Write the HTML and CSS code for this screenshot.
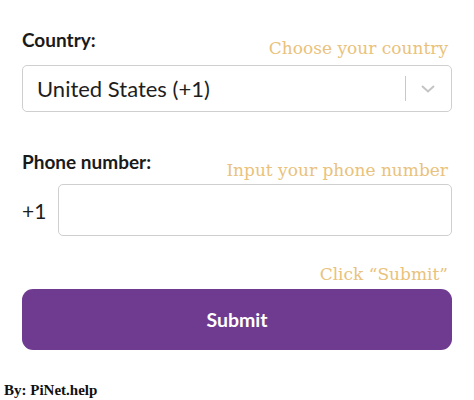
FILE: index.html
```html
<!DOCTYPE html>
<html>
<head>
<meta charset="utf-8">
<link rel="stylesheet" href="styles.css">
</head>
<body>
<div class="form">
  <div class="field-head head-country">
    <span class="label">Country:</span>
    <span class="hint">Choose your country</span>
  </div>
  <div class="select">
    <span class="select-value">United States (+1)</span>
    <span class="select-sep"></span>
    <svg class="chevron" width="16" height="10" viewBox="0 0 16 10"><path d="M2 2 L8 7.5 L14 2" fill="none" stroke="#c4c4c4" stroke-width="2"/></svg>
  </div>
  <div class="field-head head-phone">
    <span class="label">Phone number:</span>
    <span class="hint">Input your phone number</span>
  </div>
  <div class="phone-row">
    <span class="prefix">+1</span>
    <div class="input"></div>
  </div>
  <div class="submit-hint">
    <span class="hint">Click “Submit”</span>
  </div>
  <button class="submit">Submit</button>
</div>
<div class="credit">By: PiNet.help</div>
</body>
</html>
```
FILE: styles.css
```css
html, body {
  margin: 0;
  padding: 0;
  background: #ffffff;
}
body {
  width: 474px;
  height: 400px;
  overflow: hidden;
  font-family: "Lato", "Noto Sans", sans-serif;
  color: #1d1d1d;
}
.form {
  padding: 28px 22px 0 22px;
  display: flex;
  flex-direction: column;
}
.field-head {
  display: flex;
  justify-content: space-between;
  align-items: flex-start;
  height: 37px;
}
.label {
  font-weight: 700;
  font-size: 19px;
  line-height: 24px;
  color: #1a1a1a;
}
.hint {
  font-family: "DejaVu Serif", serif;
  font-size: 17px;
  color: #e9c27c;
  line-height: 20px;
  margin-top: 10px;
  margin-right: 4px;
}
.select {
  height: 45px;
  border: 1px solid #cfcfcf;
  border-radius: 5px;
  display: flex;
  align-items: center;
  padding-left: 14px;
}
.select-value {
  flex: 1;
  font-size: 22px;
  color: #1e1e1e;
}
.select-sep {
  width: 1px;
  height: 25px;
  background: #c9c9c9;
}
.chevron {
  margin: 0 15px 0 14px;
}
.head-phone {
  margin-top: 38px;
  height: 34px;
}
.phone-row {
  display: flex;
  align-items: center;
  gap: 12px;
}
.prefix {
  font-size: 21px;
  color: #1e1e1e;
}
.input {
  flex: 1;
  height: 50px;
  border: 1px solid #cfcfcf;
  border-radius: 5px;
}
.submit-hint {
  display: flex;
  justify-content: flex-end;
  height: 34px;
  margin-top: 19px;
}
.submit-hint .hint {
  margin-top: 9px;
}
.submit {
  margin-top: 0;
  height: 61px;
  border: none;
  border-radius: 11px;
  background: #6f3b91;
  color: #ffffff;
  font-family: "Lato", sans-serif;
  font-weight: 700;
  font-size: 19.5px;
}
.credit {
  margin-top: 32px;
  padding-left: 4px;
  font-family: "Liberation Serif", serif;
  font-weight: 700;
  font-size: 15px;
  color: #111;
}
```
